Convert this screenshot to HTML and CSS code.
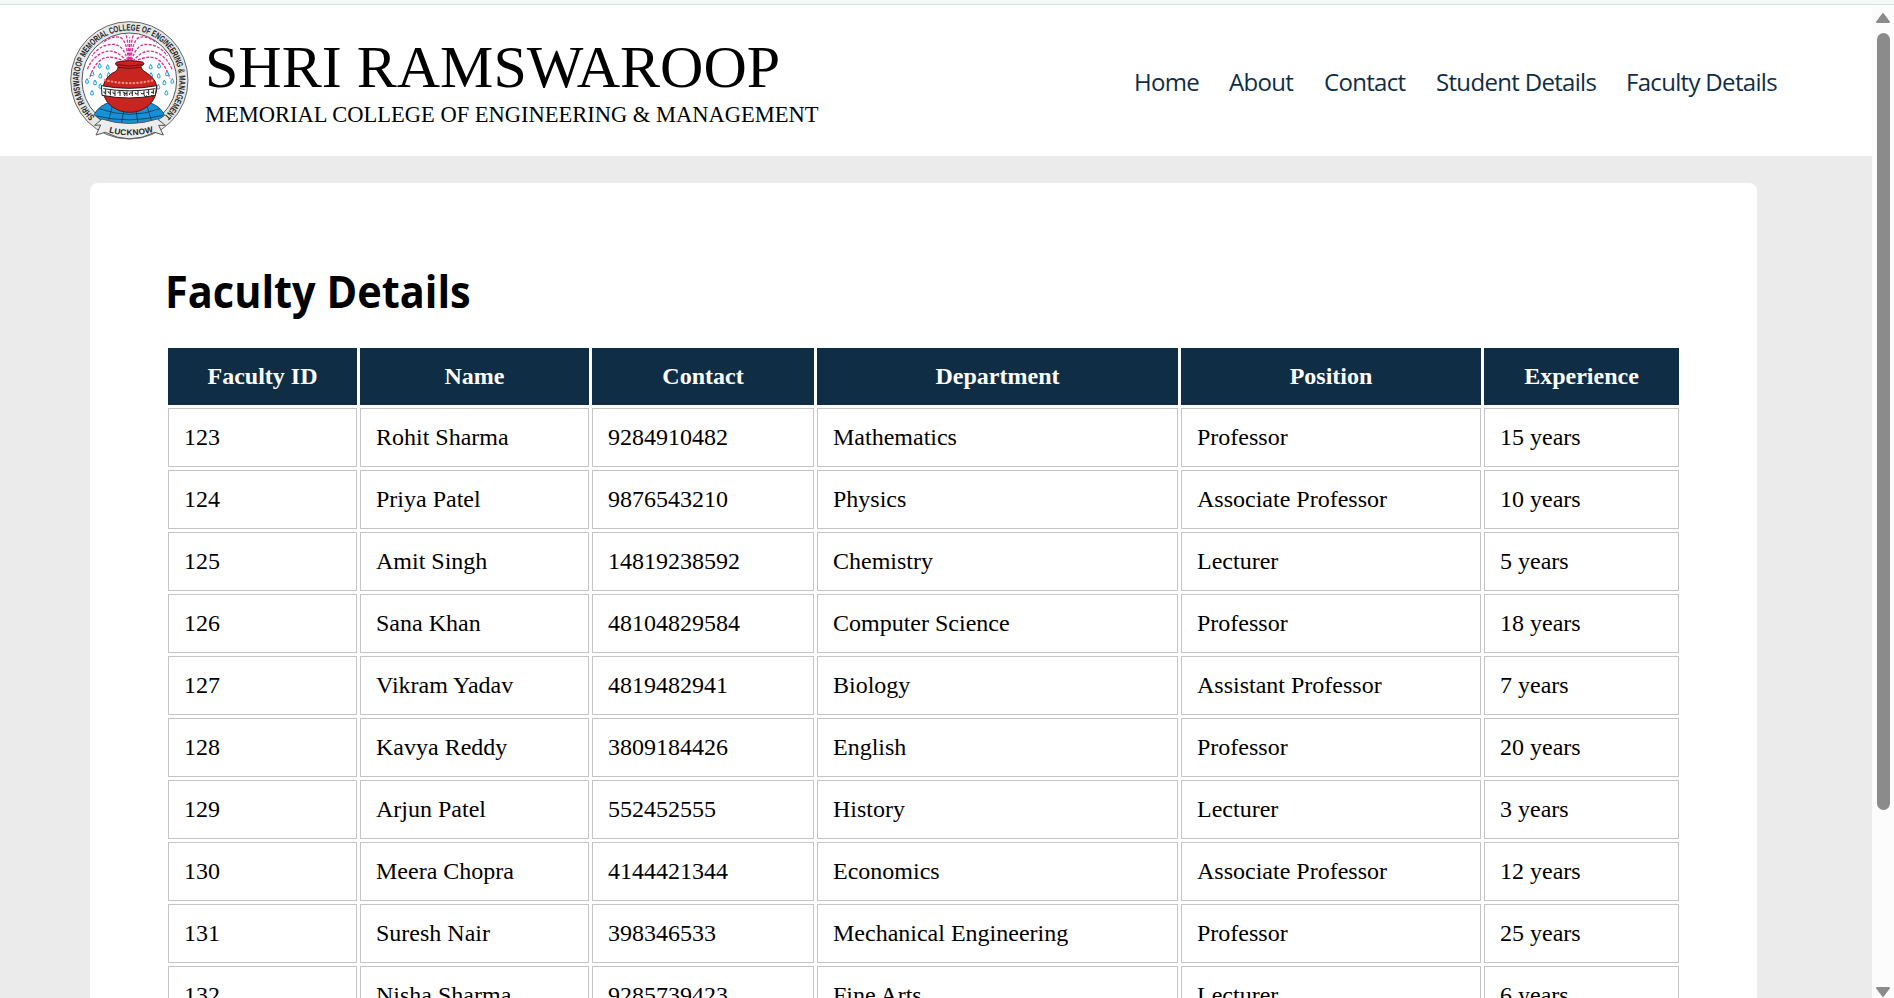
FILE: index.html
```html
<!DOCTYPE html>
<html lang="en">
<head>
<meta charset="utf-8">
<title>Faculty Details</title>
<link rel="stylesheet" href="styles.css">
</head>
<body>
<div class="top-strip"></div>
<div class="window">
<div class="page">
<header class="header">
  <svg class="logo" viewBox="0 0 420 420">
    <defs>
      <path id="ring" d="M104 320A150 150 0 1 1 313 318"/>
      <path id="ribbon" d="M146 367Q210 386 284 364"/>
      <g id="half" fill="none" stroke="#e0309c" stroke-width="4" stroke-dasharray="9 4">
        <path d="M205 150Q200 90 180 82Q152 76 128 100"/>
        <path d="M203 152Q190 104 160 103Q120 103 96 138"/>
        <path d="M200 154Q170 118 140 124Q100 134 82 178"/>
        <path d="M196 156Q160 136 132 144Q104 156 88 206"/>
        <path d="M206 150Q206 90 196 70"/>
      </g>
      <path id="drop" d="M0-7Q-9 7 0 7Q9 7 0-7Z" fill="#e8f7ff" stroke="#159fdc" stroke-width="3"/>
    </defs>
    <circle cx="208" cy="211" r="176" fill="#e6e7e9" stroke="#666" stroke-width="3"/>
    <circle cx="208" cy="211" r="142" fill="#fff" stroke="#555" stroke-width="3"/>
    <use href="#half"/><use href="#half" transform="translate(418 0) scale(-1 1)"/>
    <path d="M209 150V82" stroke="#e0309c" stroke-width="4" stroke-dasharray="9 4"/>
    <use href="#drop" x="119" y="167"/><use href="#drop" x="143" y="171"/><use href="#drop" x="97" y="190"/><use href="#drop" x="121" y="197"/><use href="#drop" x="81" y="213"/><use href="#drop" x="105" y="217"/><use href="#drop" x="96" y="248"/><use href="#drop" x="121" y="228"/><use href="#drop" x="146" y="194"/>
    <use href="#drop" x="272" y="170"/><use href="#drop" x="297" y="167"/><use href="#drop" x="321" y="190"/><use href="#drop" x="296" y="197"/><use href="#drop" x="313" y="217"/><use href="#drop" x="337" y="213"/><use href="#drop" x="319" y="248"/><use href="#drop" x="273" y="195"/><use href="#drop" x="295" y="230"/>
    <path d="M102 314Q120 280 160 276H260Q300 284 314 316L282 338Q208 350 132 338Z" fill="#1591d8" stroke="#123" stroke-width="2"/>
    <path d="M118 296Q210 330 300 296M110 318Q208 342 308 316M160 278L144 338M258 278L276 338M192 300L184 342M228 300L234 342" fill="none" stroke="#123" stroke-width="2"/>
    <path d="M170 156Q208 147 248 156Q258 162 242 169Q244 182 262 190Q294 212 290 240Q284 284 240 302Q210 312 178 302Q132 284 129 240Q128 210 156 190Q176 182 174 169Q162 162 170 156Z" fill="#c92420" stroke="#64110d" stroke-width="3"/>
    <path d="M172 164Q208 172 246 164M174 172Q208 178 244 172" fill="none" stroke="#65110e" stroke-width="3"/>
    <path d="M134 210Q208 229 284 210" fill="none" stroke="#f18c80" stroke-width="7" stroke-linecap="round" stroke-dasharray="1 10"/>
    <path d="M124 227Q208 243 290 227L286 256Q208 272 126 256Z" fill="#fff" stroke="#222" stroke-width="3"/>
    <g fill="none" stroke="#222" stroke-width="3">
      <path d="M130 236Q208 249 286 236M137 238v16M151 240v16M165 242v16M180 243v15M201 244v14M217 243v15M234 243v14M252 242v14M266 240v15M280 238v14"/>
      <path d="M137 250q-7 0-5-6M151 250q-8-1-7-7M165 251q-8 1-6-6M172 249q8-7 8 1M188 246q12 2 3 6q10 1 1 6M201 250h-7M217 250q-9-5-9 5M225 247q0 8 9 4M243 248q0 7 9 2M252 256q6 8 8 0M266 247h-7M280 247h-7M274 256q7 8 8 0"/>
    </g>
    <path d="M104 346L126 327Q208 354 292 327L316 346L296 346L310 375L284 367Q208 406 136 367L108 375L122 345Z" fill="#ededee" stroke="#555" stroke-width="3"/>
    <text class="ring-text"><textPath href="#ring" textLength="712" lengthAdjust="spacingAndGlyphs">SHRI RAMSWAROOP MEMORIAL COLLEGE OF ENGINEERING &amp; MANAGEMENT</textPath></text>
    <text class="ribbon-text"><textPath href="#ribbon" textLength="136" lengthAdjust="spacing">LUCKNOW</textPath></text>
  </svg>
  <div class="brand">
    <div class="brand-name">SHRI RAMSWAROOP</div>
    <div class="brand-sub">MEMORIAL COLLEGE OF ENGINEERING &amp; MANAGEMENT</div>
  </div>
  <nav class="nav">
    <a class="n1">Home</a><a class="n2">About</a><a class="n3">Contact</a><a class="n4">Student Details</a><a class="n5">Faculty Details</a>
  </nav>
</header>
<main class="card">
  <h1 class="title">Faculty Details</h1>
  <table class="faculty">
    <colgroup><col class="c1"><col class="c2"><col class="c3"><col class="c4"><col class="c5"><col class="c6"></colgroup>
    <tr><th>Faculty ID</th><th>Name</th><th>Contact</th><th>Department</th><th>Position</th><th>Experience</th></tr>
    <tr><td>123</td><td>Rohit Sharma</td><td>9284910482</td><td>Mathematics</td><td>Professor</td><td>15 years</td></tr>
    <tr><td>124</td><td>Priya Patel</td><td>9876543210</td><td>Physics</td><td>Associate Professor</td><td>10 years</td></tr>
    <tr><td>125</td><td>Amit Singh</td><td>14819238592</td><td>Chemistry</td><td>Lecturer</td><td>5 years</td></tr>
    <tr><td>126</td><td>Sana Khan</td><td>48104829584</td><td>Computer Science</td><td>Professor</td><td>18 years</td></tr>
    <tr><td>127</td><td>Vikram Yadav</td><td>4819482941</td><td>Biology</td><td>Assistant Professor</td><td>7 years</td></tr>
    <tr><td>128</td><td>Kavya Reddy</td><td>3809184426</td><td>English</td><td>Professor</td><td>20 years</td></tr>
    <tr><td>129</td><td>Arjun Patel</td><td>552452555</td><td>History</td><td>Lecturer</td><td>3 years</td></tr>
    <tr><td>130</td><td>Meera Chopra</td><td>4144421344</td><td>Economics</td><td>Associate Professor</td><td>12 years</td></tr>
    <tr><td>131</td><td>Suresh Nair</td><td>398346533</td><td>Mechanical Engineering</td><td>Professor</td><td>25 years</td></tr>
    <tr><td>132</td><td>Nisha Sharma</td><td>9285739423</td><td>Fine Arts</td><td>Lecturer</td><td>6 years</td></tr>
  </table>
</main>
</div>
<div class="scrollbar">
  <svg class="arrow" viewBox="0 0 16 12"><path d="M8 2L14 10H2Z"/></svg>
  <div class="thumb"></div>
  <svg class="arrow down" viewBox="0 0 16 12"><path d="M2 2H14L8 10Z"/></svg>
</div>
</div>
</body>
</html>
```
FILE: styles.css
```css
* { box-sizing: border-box; }
body { margin: 0; height: 998px; overflow: hidden; background: #fff; font-family: "Liberation Serif", "Times New Roman", serif; color: #000; }
.top-strip { height: 5px; background: #f3f9f7; border-bottom: 1px solid #d5e6e0; }
.window { display: flex; height: 993px; }
.page { width: 1872px; height: 993px; overflow: hidden; background: #ebebeb; }
.header { display: flex; height: 151px; background: #fff; padding-left: 60px; }
.logo { width: 140px; height: 140px; margin-top: 5px; flex: none; }
.ring-text { font: bold 27px "Liberation Sans Narrow", "Liberation Sans", Arial, sans-serif; fill: #222; }
.ribbon-text { font: bold 25px "Liberation Sans Narrow", "Liberation Sans", Arial, sans-serif; fill: #222; }
.brand { width: 934px; padding: 28px 0 0 5px; flex: none; white-space: nowrap; }
.brand-name { font-size: 60px; line-height: 68px; }
.brand-sub { font-size: 22.5px; line-height: 27px; }
.nav { display: flex; padding-top: 60px; font-family: "Open Sans", "Noto Sans", sans-serif; font-size: 24px; line-height: 34px; letter-spacing: -0.68px; color: #0f2e46; white-space: nowrap; }
.nav a { flex: none; }
.n1 { width: 95px; }
.n2 { width: 95px; }
.n3 { width: 112px; }
.n4 { width: 190px; }
.card { width: 1667px; height: 1300px; margin: 27px 0 0 90px; padding: 78px 75px 0; background: #fff; border-radius: 8px; }
.title { margin: 0; height: 84px; font: bold 45px/60px "Open Sans", "Noto Sans", sans-serif; transform: scaleX(.922); transform-origin: 0 0; }
.faculty { width: 1517px; table-layout: fixed; border-collapse: separate; border-spacing: 3px; font-size: 24px; line-height: 27px; }
.c1 { width: 189px; }
.c2 { width: 229px; }
.c3 { width: 222px; }
.c4 { width: 361px; }
.c5 { width: 300px; }
.c6 { width: 195px; }
.faculty th { height: 57px; padding: 0; background: #0f2e46; color: #fff; }
.faculty td { height: 59px; padding: 0 15px; border: 1px solid #c5c5c5; white-space: nowrap; }
.scrollbar { display: flex; flex-direction: column; width: 22px; height: 993px; background: #fcfcfc; align-items: center; }
.arrow { width: 16px; height: 12px; margin-top: 7px; flex: none; fill: #8b8b8b; stroke: #8b8b8b; stroke-width: 2; stroke-linejoin: round; }
.thumb { width: 13px; height: 777px; margin-top: 9px; border-radius: 7px; background: #8b8b8b; flex: none; }
.down { margin-top: 176px; }
```
